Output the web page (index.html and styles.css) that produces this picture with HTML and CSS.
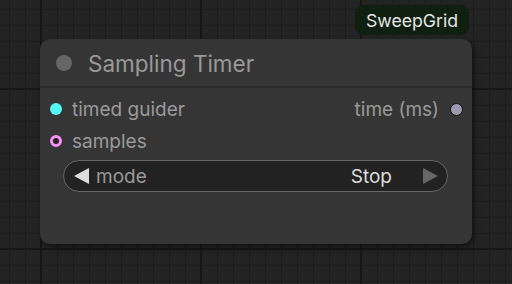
FILE: index.html
```html
<!DOCTYPE html>
<html>
<head>
<meta charset="utf-8">
<link rel="stylesheet" href="styles.css">
</head>
<body>
<div class="canvas">
  <div class="node">
    <div class="badge">SweepGrid</div>
    <div class="title">
      <span class="title-dot"></span>
      <span class="title-text">Sampling Timer</span>
    </div>
    <div class="body">
      <div class="row">
        <div class="slot">
          <span class="dot dot-cyan"></span>
          <span class="label">timed guider</span>
        </div>
        <div class="slot slot-out">
          <span class="label">time (ms)</span>
          <span class="dot dot-gray"></span>
        </div>
      </div>
      <div class="row">
        <div class="slot">
          <span class="dot dot-ring"></span>
          <span class="label">samples</span>
        </div>
      </div>
      <div class="widget">
        <span class="arrow arrow-left"></span>
        <span class="w-name">mode</span>
        <span class="w-value">Stop</span>
        <span class="arrow arrow-right"></span>
      </div>
    </div>
  </div>
</div>
</body>
</html>
```
FILE: styles.css
```css
html, body {
  margin: 0;
  padding: 0;
}
body {
  width: 512px;
  height: 284px;
  overflow: hidden;
  font-family: Inter, "Noto Sans", sans-serif;
}
.canvas {
  position: relative;
  width: 512px;
  height: 284px;
  background-color: #232323;
  background-image:
    linear-gradient(to right, #161616 2px, transparent 2px),
    linear-gradient(to bottom, #161616 2px, transparent 2px),
    linear-gradient(to right, #1c1c1c 1px, transparent 1px),
    linear-gradient(to bottom, #1c1c1c 1px, transparent 1px);
  background-size: 160px 160px, 160px 160px, 16px 16px, 16px 16px;
  background-position: 40px 0, 0 88px, 9px 0, 0 9px;
}
.node {
  position: absolute;
  left: 40px;
  top: 39px;
  width: 432px;
  height: 205px;
  background: #353535;
  border-radius: 10px;
  box-shadow: 2px 3px 6px rgba(0, 0, 0, 0.5);
  box-sizing: border-box;
}
.badge {
  position: absolute;
  left: 315px;
  top: -34px;
  width: 114px;
  height: 30px;
  box-sizing: border-box;
  background: #0f1f10;
  border-radius: 8px;
  color: #e6e6e6;
  font-size: 17.7px;
  display: flex;
  align-items: center;
  justify-content: center;
}
.title {
  height: 49px;
  display: flex;
  align-items: center;
  padding-left: 16px;
  border-bottom: 2px solid #2b2b2b;
  box-sizing: border-box;
}
.title-dot {
  width: 16px;
  height: 16px;
  border-radius: 50%;
  background: #666666;
  margin-right: 16px;
}
.title-text {
  color: #999999;
  font-size: 22.5px;
  margin-top: 1px;
}
.body {
  padding: 5px 0 0 0;
}
.row {
  height: 32px;
  display: flex;
  align-items: center;
  justify-content: space-between;
  padding: 0 9px 0 10px;
}
.slot {
  display: flex;
  align-items: center;
  gap: 10px;
}
.slot-out {
  gap: 11px;
}
.label {
  color: #9a9a9a;
  font-size: 19px;
}
.dot {
  width: 12px;
  height: 12px;
  border-radius: 50%;
  box-sizing: border-box;
}
.dot-cyan {
  background: #55f5f8;
}
.dot-gray {
  width: 13px;
  height: 13px;
  background: #9a99ae;
  border: 1.5px solid #111;
}
.dot-ring {
  background: #252525;
  border: 3px solid #f98ff8;
}
.widget {
  margin: 3px 24px 0 23px;
  height: 32px;
  box-sizing: border-box;
  border: 1px solid #666666;
  border-radius: 16px;
  background: #222222;
  display: flex;
  align-items: center;
  padding: 0 9px 0 10px;
}
.arrow {
  width: 0;
  height: 0;
  border-top: 8px solid transparent;
  border-bottom: 8px solid transparent;
}
.arrow-left {
  border-right: 15px solid #dddddd;
  margin-right: 7px;
}
.arrow-right {
  border-left: 15px solid #666666;
  margin-left: 31px;
}
.w-name {
  color: #999999;
  font-size: 19px;
  flex: 1;
}
.w-value {
  color: #dddddd;
  font-size: 19px;
}
```
